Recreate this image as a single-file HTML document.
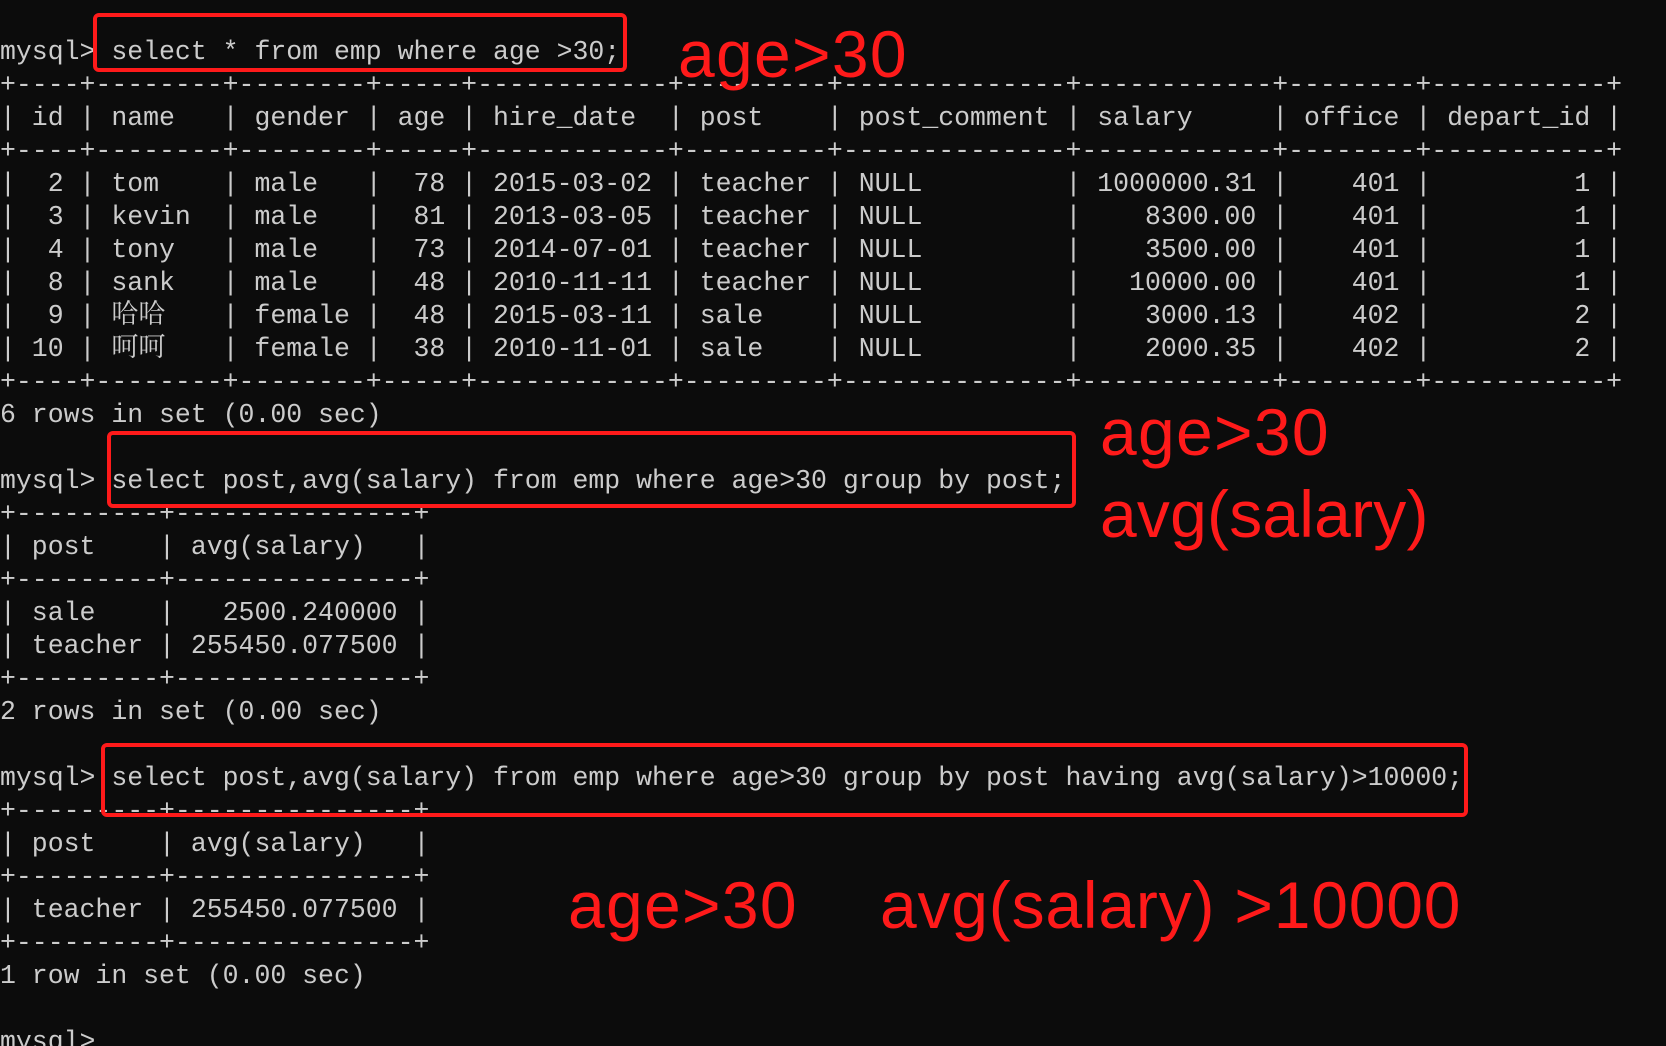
<!DOCTYPE html>
<html><head><meta charset="utf-8"><style>
html,body{margin:0;padding:0;background:#0c0c0c;width:1666px;height:1046px;overflow:hidden;position:relative}
pre{position:absolute;left:0;top:36px;margin:0;font-family:"Liberation Mono","Noto Sans CJK SC",monospace;font-size:26.5px;line-height:33px;color:#cccccc;white-space:pre}
.cj{display:inline-block;width:63.6px;height:20px;line-height:20px;vertical-align:baseline;overflow:visible;font-family:"Noto Serif CJK SC","Noto Sans CJK SC",serif;font-size:27px}
.box{position:absolute;border:4px solid #ff1a1a;border-radius:6px}
.r{position:absolute;font-family:"Liberation Sans",sans-serif;font-size:66px;line-height:66px;color:#ff1a1a;letter-spacing:1.3px;white-space:pre}
.a{letter-spacing:0.2px}
.b{letter-spacing:0.8px}
</style></head><body>
<pre>mysql&gt; select * from emp where age &gt;30;
+----+--------+--------+-----+------------+---------+--------------+------------+--------+-----------+
| id | name   | gender | age | hire_date  | post    | post_comment | salary     | office | depart_id |
+----+--------+--------+-----+------------+---------+--------------+------------+--------+-----------+
|  2 | tom    | male   |  78 | 2015-03-02 | teacher | NULL         | 1000000.31 |    401 |         1 |
|  3 | kevin  | male   |  81 | 2013-03-05 | teacher | NULL         |    8300.00 |    401 |         1 |
|  4 | tony   | male   |  73 | 2014-07-01 | teacher | NULL         |    3500.00 |    401 |         1 |
|  8 | sank   | male   |  48 | 2010-11-11 | teacher | NULL         |   10000.00 |    401 |         1 |
|  9 | <span class="cj">哈哈</span>   | female |  48 | 2015-03-11 | sale    | NULL         |    3000.13 |    402 |         2 |
| 10 | <span class="cj">呵呵</span>   | female |  38 | 2010-11-01 | sale    | NULL         |    2000.35 |    402 |         2 |
+----+--------+--------+-----+------------+---------+--------------+------------+--------+-----------+
6 rows in set (0.00 sec)

mysql&gt; select post,avg(salary) from emp where age&gt;30 group by post;
+---------+---------------+
| post    | avg(salary)   |
+---------+---------------+
| sale    |   2500.240000 |
| teacher | 255450.077500 |
+---------+---------------+
2 rows in set (0.00 sec)

mysql&gt; select post,avg(salary) from emp where age&gt;30 group by post having avg(salary)&gt;10000;
+---------+---------------+
| post    | avg(salary)   |
+---------+---------------+
| teacher | 255450.077500 |
+---------+---------------+
1 row in set (0.00 sec)

mysql&gt;</pre>
<div class="box" style="left:93px;top:13px;width:526px;height:51px"></div>
<div class="box" style="left:107px;top:431px;width:961px;height:69px"></div>
<div class="box" style="left:101px;top:743px;width:1359px;height:66px"></div>
<div class="r" style="left:678px;top:21px">age&gt;30</div>
<div class="r" style="left:1100px;top:399px">age&gt;30</div>
<div class="r a" style="left:1100px;top:481px">avg(salary)</div>
<div class="r" style="left:568px;top:872px">age&gt;30</div>
<div class="r b" style="left:880px;top:872px">avg(salary) &gt;10000</div>
</body></html>
